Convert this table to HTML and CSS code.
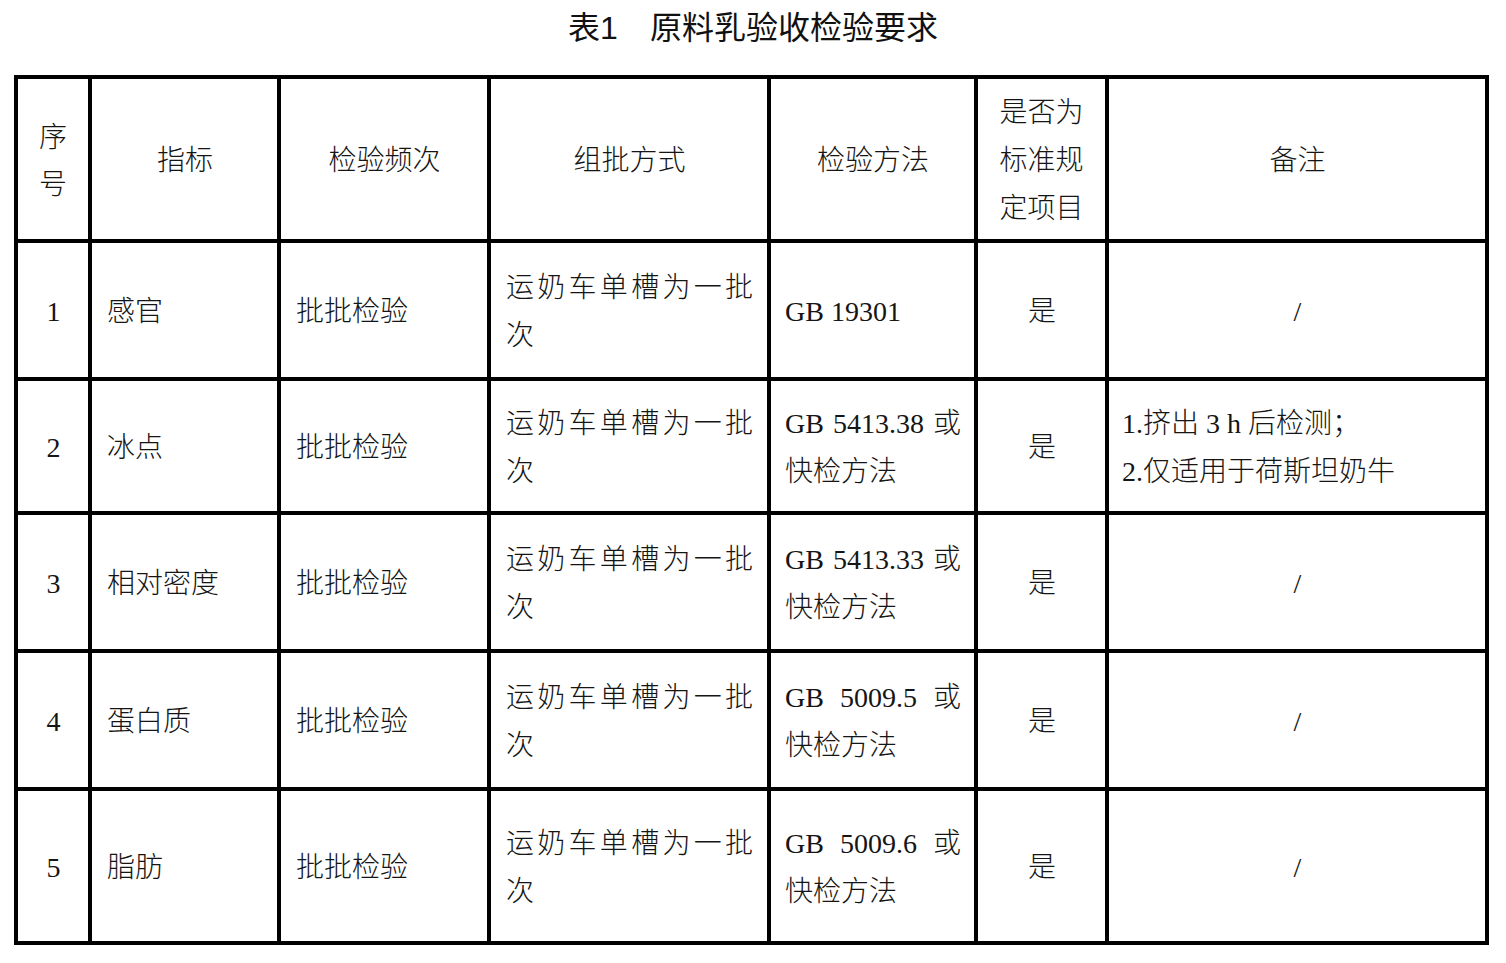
FILE: index.html
```html
<!DOCTYPE html>
<html lang="zh-CN">
<head>
<meta charset="utf-8">
<title>表1 原料乳验收检验要求</title>
<link rel="stylesheet" href="styles.css">
</head>
<body>
<h1 class="caption">表1　原料乳验收检验要求</h1>
<div class="sheet">
  <div class="row head">
    <div class="cell col-no"><p class="narrow">序号</p></div>
    <div class="cell mid"><p>指标</p></div>
    <div class="cell mid"><p>检验频次</p></div>
    <div class="cell mid"><p>组批方式</p></div>
    <div class="cell mid"><p>检验方法</p></div>
    <div class="cell mid col-std"><p>是否为标准规定项目</p></div>
    <div class="cell mid"><p>备注</p></div>
  </div>

  <div class="row">
    <div class="cell mid"><p>1</p></div>
    <div class="cell"><p>感官</p></div>
    <div class="cell"><p>批批检验</p></div>
    <div class="cell just"><p>运奶车单槽为一批次</p></div>
    <div class="cell just col-method"><p>GB 19301</p></div>
    <div class="cell mid"><p>是</p></div>
    <div class="cell mid"><p>/</p></div>
  </div>

  <div class="row">
    <div class="cell mid"><p>2</p></div>
    <div class="cell"><p>冰点</p></div>
    <div class="cell"><p>批批检验</p></div>
    <div class="cell just"><p>运奶车单槽为一批次</p></div>
    <div class="cell just col-method"><p>GB 5413.38 或快检方法</p></div>
    <div class="cell mid"><p>是</p></div>
    <div class="cell col-note"><p>1.挤出 3 h 后检测；<br>2.仅适用于荷斯坦奶牛</p></div>
  </div>

  <div class="row">
    <div class="cell mid"><p>3</p></div>
    <div class="cell"><p>相对密度</p></div>
    <div class="cell"><p>批批检验</p></div>
    <div class="cell just"><p>运奶车单槽为一批次</p></div>
    <div class="cell just col-method"><p>GB 5413.33 或快检方法</p></div>
    <div class="cell mid"><p>是</p></div>
    <div class="cell mid"><p>/</p></div>
  </div>

  <div class="row">
    <div class="cell mid"><p>4</p></div>
    <div class="cell"><p>蛋白质</p></div>
    <div class="cell"><p>批批检验</p></div>
    <div class="cell just"><p>运奶车单槽为一批次</p></div>
    <div class="cell just col-method"><p>GB 5009.5 或快检方法</p></div>
    <div class="cell mid"><p>是</p></div>
    <div class="cell mid"><p>/</p></div>
  </div>

  <div class="row">
    <div class="cell mid"><p>5</p></div>
    <div class="cell"><p>脂肪</p></div>
    <div class="cell"><p>批批检验</p></div>
    <div class="cell just"><p>运奶车单槽为一批次</p></div>
    <div class="cell just col-method"><p>GB 5009.6 或快检方法</p></div>
    <div class="cell mid"><p>是</p></div>
    <div class="cell mid"><p>/</p></div>
  </div>
</div>
</body>
</html>
```

FILE: styles.css
```css
html, body {
  margin: 0;
  padding: 0;
  background: #ffffff;
}

body {
  color: #151515;
  font-family: "Liberation Serif", "Noto Sans CJK SC", serif;
  font-size: 28px;
  font-weight: 300;
  line-height: 48px;
}

.caption {
  margin: 0 0 18px;
  font-family: "Liberation Sans", "Noto Sans CJK SC", sans-serif;
  font-size: 32px;
  font-weight: normal;
  line-height: 57px;
  text-align: center;
  color: #111111;
}

.sheet {
  display: grid;
  grid-template-columns: 74px 189px 210px 280px 207px 131px 380px;
  grid-template-rows: 164px 138px 134px 138px 138px 154px;
  width: max-content;
  margin-left: 14px;
  border-left: 4px solid #000000;
  border-top: 4px solid #000000;
}

.row {
  display: contents;
}

.cell {
  box-sizing: border-box;
  display: flex;
  align-items: center;
  padding: 3px 14px 0 15px;
  border-right: 4px solid #000000;
  border-bottom: 4px solid #000000;
}

.cell p {
  flex: 1;
  margin: 0;
  text-align: left;
}

.cell.mid p {
  text-align: center;
}

.cell.just p {
  text-align: justify;
  text-justify: inter-character;
}

.cell.col-no {
  padding: 3px 10px 0;
}

.cell.col-no p {
  text-align: center;
  line-height: 47px;
}

.cell.col-std {
  padding: 3px 12px 0;
}

.cell.col-method {
  padding: 3px 13px 0 14px;
}

.cell.col-note {
  padding: 3px 12px 0 13px;
}
```
